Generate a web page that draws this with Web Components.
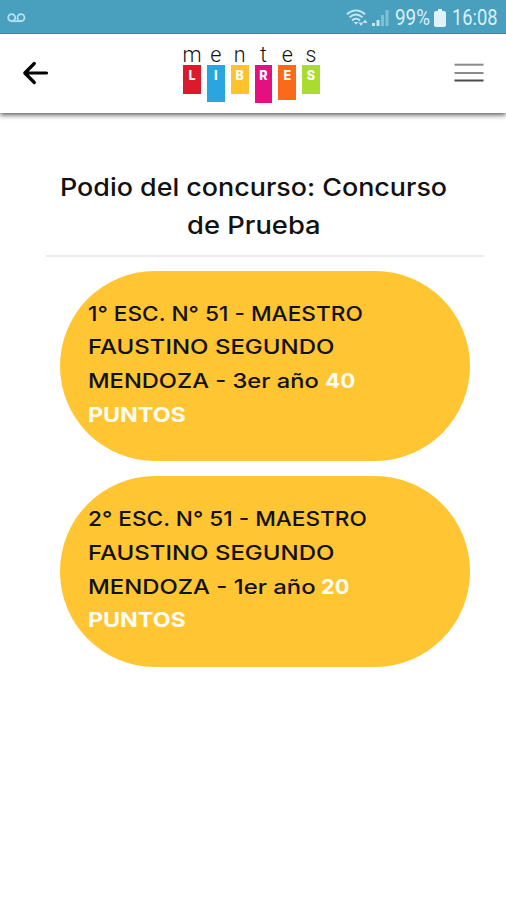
<!DOCTYPE html>
<html lang="es">
<head>
<meta charset="utf-8">
<title>Mentes Libres</title>
<style>
    body {
        margin: 0;
        min-height: 900px;
        background: #fff;
        color: #111;
        font-family: Inter, "Open Sans", sans-serif;
        overflow: hidden;
    }
</style>
</head>
<body>
<app-status-bar></app-status-bar>
<app-header></app-header>
<podium-view>
    <fit-text slot="title" width="387">Podio del concurso: Concurso</fit-text>
    <fit-text slot="title" width="134">de Prueba</fit-text>
    <podium-card>
        <fit-text width="275">1° ESC. N° 51 - MAESTRO</fit-text>
        <fit-text width="246">FAUSTINO SEGUNDO</fit-text>
        <podium-row>
            <fit-text width="231">MENDOZA - 3er año</fit-text>
            <fit-text width="30" strong>40</fit-text>
        </podium-row>
        <fit-text width="98" strong>PUNTOS</fit-text>
    </podium-card>
    <podium-card>
        <fit-text width="279">2° ESC. N° 51 - MAESTRO</fit-text>
        <fit-text width="246">FAUSTINO SEGUNDO</fit-text>
        <podium-row>
            <fit-text width="227">MENDOZA - 1er año</fit-text>
            <fit-text width="28" strong>20</fit-text>
        </podium-row>
        <fit-text width="98" strong>PUNTOS</fit-text>
    </podium-card>
</podium-view>

<script>
// One line of text, stretched horizontally to a given width
class FitText extends HTMLElement {
    constructor() {
        super();
        this.attachShadow({ mode: 'open' });
        this.shadowRoot.innerHTML = `
            <style>
                :host { display: block; white-space: nowrap; }
                :host([strong]) { color: #fffdf2; font-weight: 650; }
                span { display: inline-block; transform-origin: 0 50%; }
            </style>
            <span><slot></slot></span>
        `;
    }

    connectedCallback() {
        const width = Number(this.getAttribute('width'));
        const span = this.shadowRoot.querySelector('span');
        this.style.width = `${width}px`;
        span.style.transform = `scaleX(${width / span.offsetWidth})`;
    }
}

class AppStatusBar extends HTMLElement {
    constructor() {
        super();
        this.attachShadow({ mode: 'open' });
        this.shadowRoot.innerHTML = `
            <style>
                :host {
                    display: flex;
                    justify-content: space-between;
                    align-items: center;
                    position: relative;
                    z-index: 1;
                    box-sizing: border-box;
                    height: 34px;
                    padding: 2px 8px 0 7px;
                    background: #489fbe;
                    border-bottom: 1px solid #218fae;
                    color: #d9f0f8;
                    font: 400 21.5px/32px Roboto, sans-serif;
                }
                .right { display: flex; align-items: center; }
                svg { display: block; }
                .wifi { margin-right: 4px; }
                .signal { margin-right: 6px; }
                .battery { margin: 0 6px 0 4px; }
            </style>
            <svg width="19" height="10" viewBox="0 0 19 10" fill="none" stroke="#b5e2f0" stroke-width="1.8">
                <circle cx="4.7" cy="4.7" r="3.5"/>
                <circle cx="14" cy="4.7" r="3.5"/>
                <path d="M4.7 8.2H14"/>
            </svg>
            <div class="right">
                <svg class="wifi" width="22" height="18" viewBox="0 0 22 18" fill="none" stroke="#c5e7f2" stroke-width="1.8">
                    <path d="M.8 5.2Q10-2.5 19.200 5.200M3.400 8.400Q10 2.600 16.600 8.400M6 11.500Q10 7.700 14 11.500"/>
                    <path d="M7.500 13h5L10 15.800z" fill="#c5e7f2" stroke="none"/>
                    <path d="M12.500 13.500h5L15 17zM16.500 14h5L19 10.500z" fill="#c5e7f2" stroke="none"/>
                </svg>
                <svg class="signal" width="17" height="18" viewBox="0 0 17 18" fill="#c5e7f2">
                    <path d="M0 14h3v3H0zM4.500 11h3v6h-3z"/>
                    <path d="M9 6h3v11H9zM13.500 1h3v16h-3z" opacity=".45"/>
                </svg>
                <fit-text width="35">99%</fit-text>
                <svg class="battery" width="12" height="18" viewBox="0 0 12 18" fill="#dff2f9">
                    <path d="M4 0h4v2h2q2 0 2 2v12q0 2-2 2H2q-2 0-2-2V4q0-2 2-2h2z"/>
                </svg>
                <fit-text width="46">16:08</fit-text>
            </div>
        `;
    }
}

class BrandLogo extends HTMLElement {
    constructor() {
        super();
        this.attachShadow({ mode: 'open' });
        const columns = [
            ['m', 'L', '#db1a2c', 29],
            ['e', 'I', '#29a5df', 37],
            ['n', 'B', '#fdc22f', 29],
            ['t', 'R', '#e5107f', 38],
            ['e', 'E', '#f96a1b', 35],
            ['s', 'S', '#a9dc2e', 29]
        ];
        this.shadowRoot.innerHTML = `
            <style>
                :host { display: flex; gap: 6px; height: 62px; }
                .column { width: 17.8px; display: flex; flex-direction: column; align-items: center; }
                .top { font: 300 21.5px/26px Roboto, sans-serif; height: 23px; color: #111; }
                .flag {
                    width: 100%;
                    text-align: center;
                    color: #fff;
                    font: 800 12.5px/21px Inter, sans-serif;
                }
            </style>
            ${columns.map(([top, letter, color, height]) => `
                <div class="column">
                    <span class="top">${top}</span>
                    <div class="flag" style="background:${color};height:${height}px">${letter}</div>
                </div>
            `).join('')}
        `;
    }
}

class AppHeader extends HTMLElement {
    constructor() {
        super();
        this.attachShadow({ mode: 'open' });
        this.shadowRoot.innerHTML = `
            <style>
                :host {
                    display: grid;
                    grid-template-columns: 1fr auto 1fr;
                    align-items: center;
                    box-sizing: border-box;
                    height: 79px;
                    padding: 0 22px 1px;
                    background: #fff;
                    box-shadow: 0 2px 5px rgba(0, 0, 0, .65);
                }
                svg { display: block; }
                .menu { justify-self: end; }
                brand-logo { margin-left: -3px; }
            </style>
            <svg width="28" height="24" viewBox="0 0 28 24" fill="none" stroke="#000" stroke-width="3.2" stroke-linecap="round" stroke-linejoin="round">
                <path d="M12.300 2.500L2.800 12l9.500 9.500M3 12h21.500"/>
            </svg>
            <brand-logo></brand-logo>
            <svg class="menu" width="30" height="20" viewBox="0 0 30 20">
                <path d="M.5 .7h29v2H.5z" fill="#8b8b8b"/>
                <path d="M.5 9h29v2H.5z" fill="#8b8b8b"/>
                <path d="M.5 16.500h29v2H.5z" fill="#4b4b4b"/>
            </svg>
        `;
    }
}

class PodiumView extends HTMLElement {
    constructor() {
        super();
        this.attachShadow({ mode: 'open' });
        this.shadowRoot.innerHTML = `
            <style>
                :host { display: block; padding: 55px 22px 0 46px; }
                .title {
                    display: flex;
                    flex-direction: column;
                    align-items: center;
                    box-sizing: border-box;
                    height: 89px;
                    padding-right: 23px;
                    border-bottom: 2px solid #ebebeb;
                    font-size: 24.5px;
                    font-weight: 500;
                    line-height: 38px;
                }
                .cards {
                    display: flex;
                    flex-direction: column;
                    gap: 15px;
                    padding: 13.6px 14px 0 13.5px;
                }
            </style>
            <div class="title"><slot name="title"></slot></div>
            <div class="cards"><slot></slot></div>
        `;
    }
}

class PodiumCard extends HTMLElement {
    constructor() {
        super();
        this.attachShadow({ mode: 'open' });
        this.shadowRoot.innerHTML = `
            <style>
                :host {
                    display: block;
                    box-sizing: border-box;
                    height: 190.5px;
                    padding: 26px 28px;
                    border-radius: 95.25px;
                    background: #ffc533;
                    font-size: 20.2px;
                    font-weight: 500;
                    line-height: 33.7px;
                }
            </style>
            <slot></slot>
        `;
    }
}

class PodiumRow extends HTMLElement {
    constructor() {
        super();
        this.attachShadow({ mode: 'open' });
        this.shadowRoot.innerHTML = `
            <style>
                :host { display: flex; gap: 6px; }
            </style>
            <slot></slot>
        `;
    }
}

// Containers go first, so that a line is measured in its final font
customElements.define('podium-view', PodiumView);
customElements.define('podium-card', PodiumCard);
customElements.define('podium-row', PodiumRow);
customElements.define('brand-logo', BrandLogo);
customElements.define('app-header', AppHeader);
customElements.define('app-status-bar', AppStatusBar);
customElements.define('fit-text', FitText);
</script>
</body>
</html>
